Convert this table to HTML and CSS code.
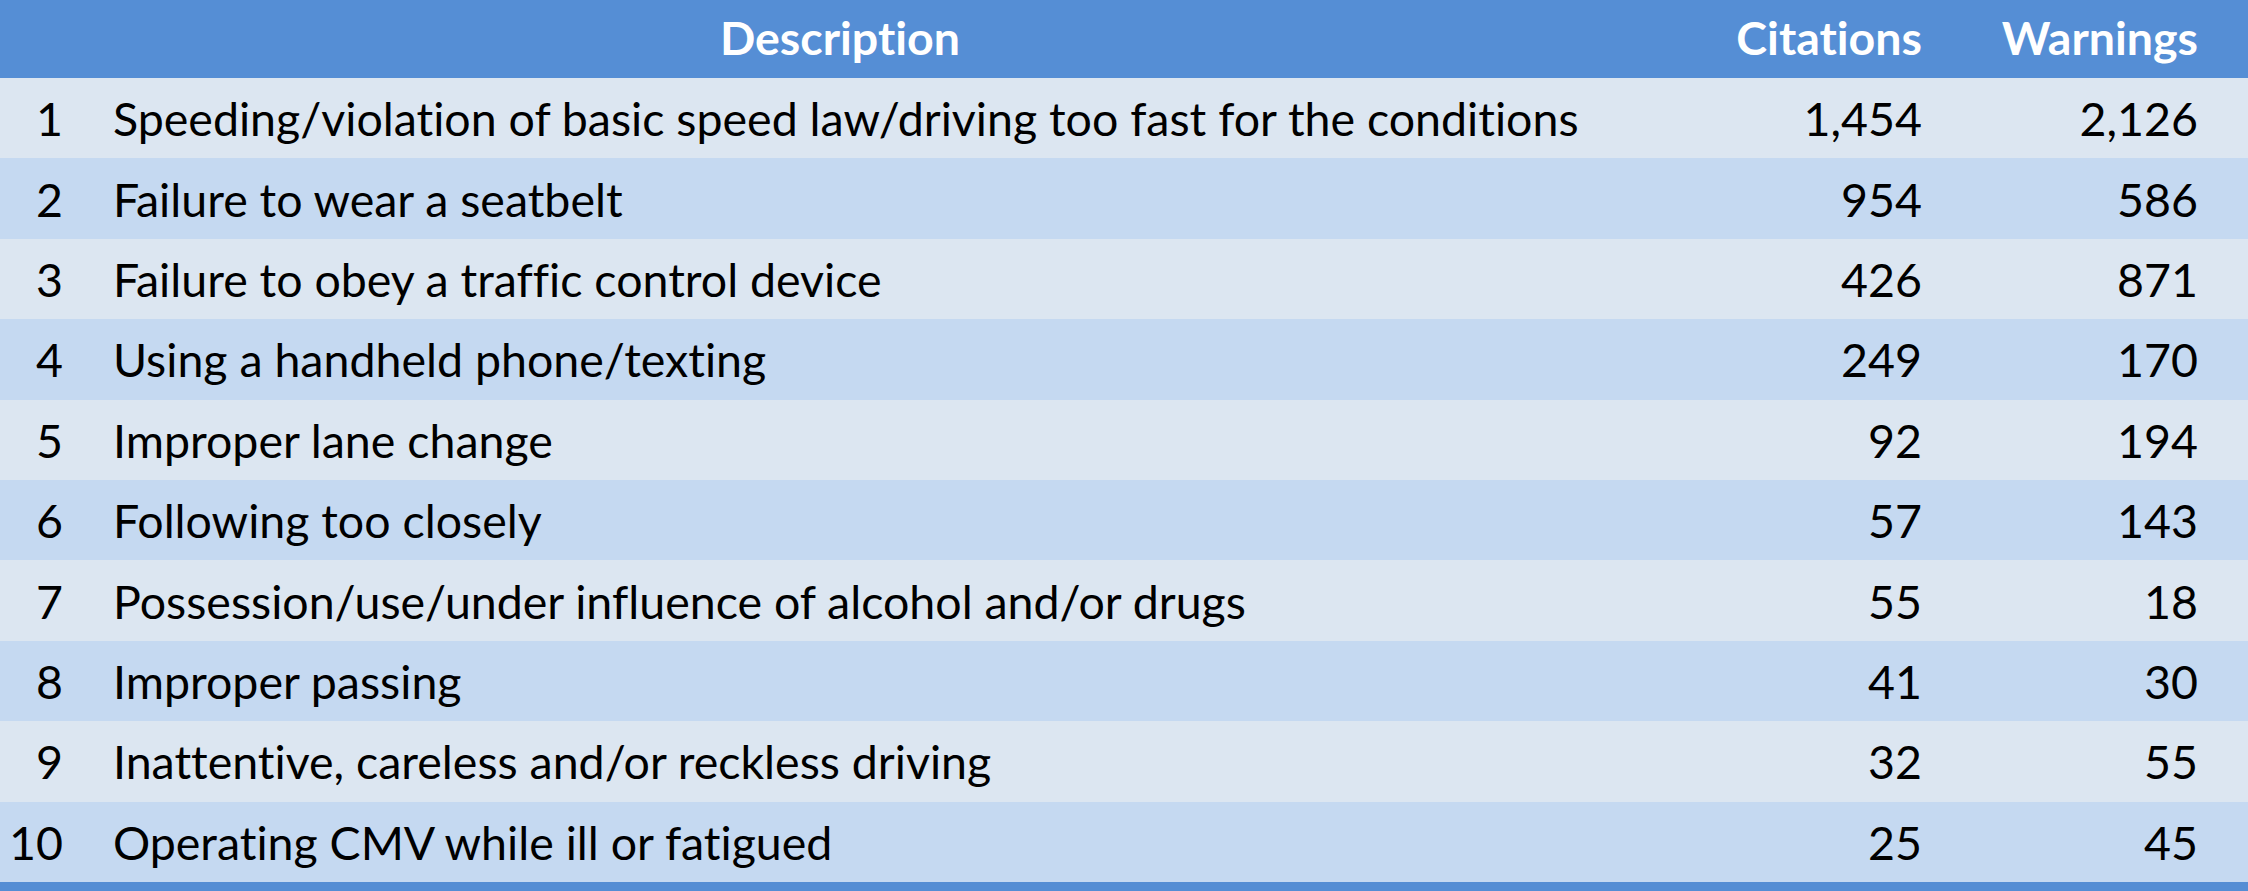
FILE: index.html
```html
<!DOCTYPE html>
<html>
<head>
<meta charset="utf-8">
<link rel="stylesheet" href="styles.css">
</head>
<body>
<div class="table">
  <div class="row head">
    <div class="num"></div>
    <div class="desc">Description</div>
    <div class="val">Citations</div>
    <div class="val">Warnings</div>
    <div></div>
  </div>
  <div class="row odd"><div class="num">1</div><div class="desc">Speeding/violation of basic speed law/driving too fast for the conditions</div><div class="val">1,454</div><div class="val">2,126</div><div></div></div>
  <div class="row even"><div class="num">2</div><div class="desc">Failure to wear a seatbelt</div><div class="val">954</div><div class="val">586</div><div></div></div>
  <div class="row odd"><div class="num">3</div><div class="desc">Failure to obey a traffic control device</div><div class="val">426</div><div class="val">871</div><div></div></div>
  <div class="row even"><div class="num">4</div><div class="desc">Using a handheld phone/texting</div><div class="val">249</div><div class="val">170</div><div></div></div>
  <div class="row odd"><div class="num">5</div><div class="desc">Improper lane change</div><div class="val">92</div><div class="val">194</div><div></div></div>
  <div class="row even"><div class="num">6</div><div class="desc">Following too closely</div><div class="val">57</div><div class="val">143</div><div></div></div>
  <div class="row odd"><div class="num">7</div><div class="desc">Possession/use/under influence of alcohol and/or drugs</div><div class="val">55</div><div class="val">18</div><div></div></div>
  <div class="row even"><div class="num">8</div><div class="desc">Improper passing</div><div class="val">41</div><div class="val">30</div><div></div></div>
  <div class="row odd"><div class="num">9</div><div class="desc">Inattentive, careless and/or reckless driving</div><div class="val">32</div><div class="val">55</div><div></div></div>
  <div class="row even"><div class="num">10</div><div class="desc">Operating CMV while ill or fatigued</div><div class="val">25</div><div class="val">45</div><div></div></div>
</div>
</body>
</html>
```

FILE: styles.css
```css
html, body {
  margin: 0;
  padding: 0;
  background: #ffffff;
}

.table {
  width: 2248px;
  height: 891px;
  border-bottom: 9px solid #548dd4;
  box-sizing: border-box;
  font-family: "Lato", "Liberation Sans", sans-serif;
  font-size: 46.5px;
  font-variant-ligatures: none;
  color: #000000;
}

.row {
  display: grid;
  grid-template-columns: 75px 1530px 327px 276px 40px;
  align-items: center;
  height: 80.4px;
}

.row.head {
  height: 78px;
  padding-bottom: 4px;
  box-sizing: border-box;
  background: #558ed5;
  color: #ffffff;
  font-weight: bold;
}

.row.odd { background: #dce6f1; }
.row.even { background: #c5d9f1; }

.num {
  text-align: right;
  padding-right: 12px;
}

.desc {
  padding-left: 38px;
  white-space: nowrap;
}

.head .desc {
  padding-left: 0;
  text-align: center;
}

.val {
  text-align: right;
  padding-right: 10px;
}
```
